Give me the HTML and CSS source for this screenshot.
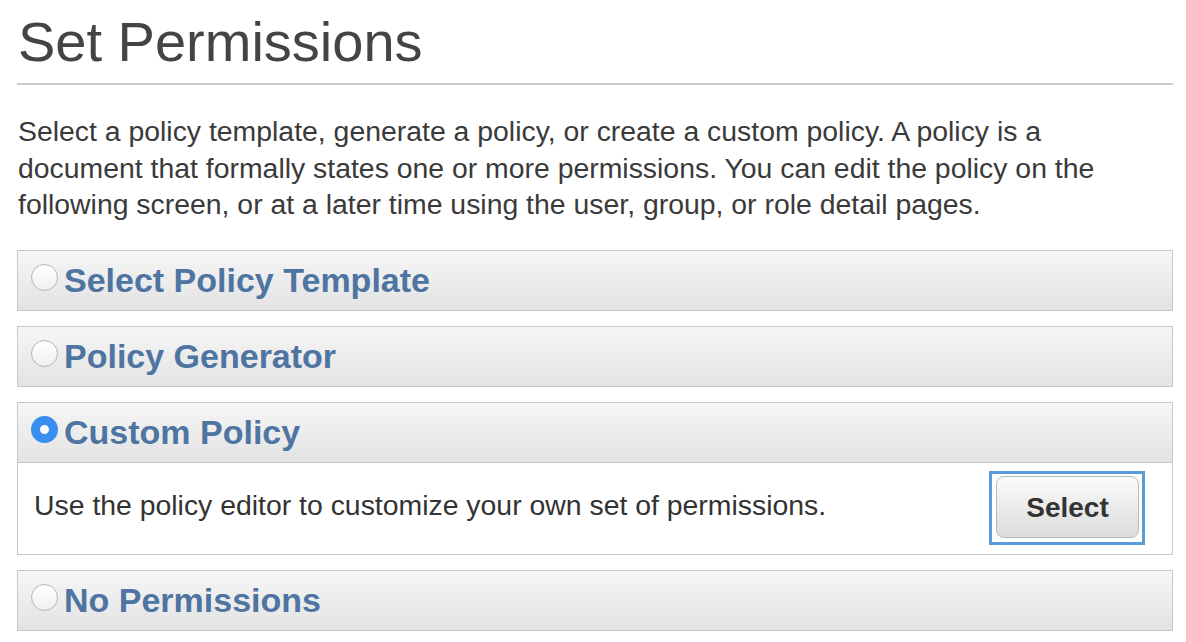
FILE: index.html
```html
<!DOCTYPE html>
<html>
<head>
<meta charset="utf-8">
<link rel="stylesheet" href="styles.css">
</head>
<body>
<div class="page">
  <h1 class="title">Set Permissions</h1>
  <div class="rule"></div>
  <p class="intro">Select a policy template, generate a policy, or create a custom policy. A policy is a document that formally states one or more permissions. You can edit the policy on the following screen, or at a later time using the user, group, or role detail pages.</p>

  <div class="panel">
    <div class="panel-head"><span class="radio"></span><span class="label">Select Policy Template</span></div>
  </div>
  <div class="panel">
    <div class="panel-head"><span class="radio"></span><span class="label">Policy Generator</span></div>
  </div>
  <div class="panel">
    <div class="panel-head"><span class="radio checked"></span><span class="label">Custom Policy</span></div>
    <div class="panel-body">
      <span class="desc">Use the policy editor to customize your own set of permissions.</span>
      <div class="focus-ring"><button class="btn">Select</button></div>
    </div>
  </div>
  <div class="panel">
    <div class="panel-head"><span class="radio"></span><span class="label">No Permissions</span></div>
  </div>
</div>
</body>
</html>
```

FILE: styles.css
```css
html, body {
  margin: 0;
  padding: 0;
  background: #ffffff;
}
body {
  font-family: "Liberation Sans", Arial, Helvetica, sans-serif;
  color: #333333;
}
.page {
  padding: 0 13px 0 17px;
}
.title {
  margin: 0;
  padding: 10px 0 0 1px;
  font-size: 56px;
  font-weight: normal;
  line-height: 64px;
  color: #444444;
}
.rule {
  margin-top: 9px;
  height: 2px;
  background: #cccccc;
}
.intro {
  max-width: 1120px;
  margin: 28px 0 0 1px;
  font-size: 28.4px;
  line-height: 36.5px;
  color: #3a3a3a;
}
.panel {
  margin-top: 15px;
  border: 1px solid #c8c8c8;
  background: #ffffff;
}
.intro + .panel {
  margin-top: 27px;
}
.panel-head {
  display: flex;
  align-items: center;
  height: 59px;
  padding-left: 13px;
  background: linear-gradient(#f6f6f6, #e3e3e3);
}
.panel-head + .panel-body {
  border-top: 1px solid #c8c8c8;
}
.radio {
  box-sizing: border-box;
  width: 27px;
  height: 27px;
  border-radius: 50%;
  border: 1px solid #b4b4b4;
  background: linear-gradient(#ffffff, #f0f0f0);
  margin-top: -5px;
  flex: none;
}
.radio.checked {
  border: 9px solid #3a8ef0;
  background: #ffffff;
}
.label {
  margin-left: 6px;
  font-size: 34px;
  font-weight: bold;
  color: #4e74a2;
  line-height: 40px;
}
.panel-head + .panel-body {
  display: flex;
  align-items: center;
  justify-content: space-between;
  height: 91px;
  padding: 0 27px 0 16px;
}
.desc {
  font-size: 28.4px;
  color: #333333;
  margin-top: -6px;
}
.focus-ring {
  border: 3px solid #5b9bd5;
  padding: 2px 3px 4px 4px;
}
.btn {
  display: block;
  width: 143px;
  height: 62px;
  border: 1px solid #b9b9b9;
  border-radius: 8px;
  background: linear-gradient(#fbfbfb, #dcdcdc);
  font-family: "Liberation Sans", Arial, Helvetica, sans-serif;
  font-size: 28px;
  font-weight: bold;
  color: #333333;
  padding: 2px 0 0;
}
```
